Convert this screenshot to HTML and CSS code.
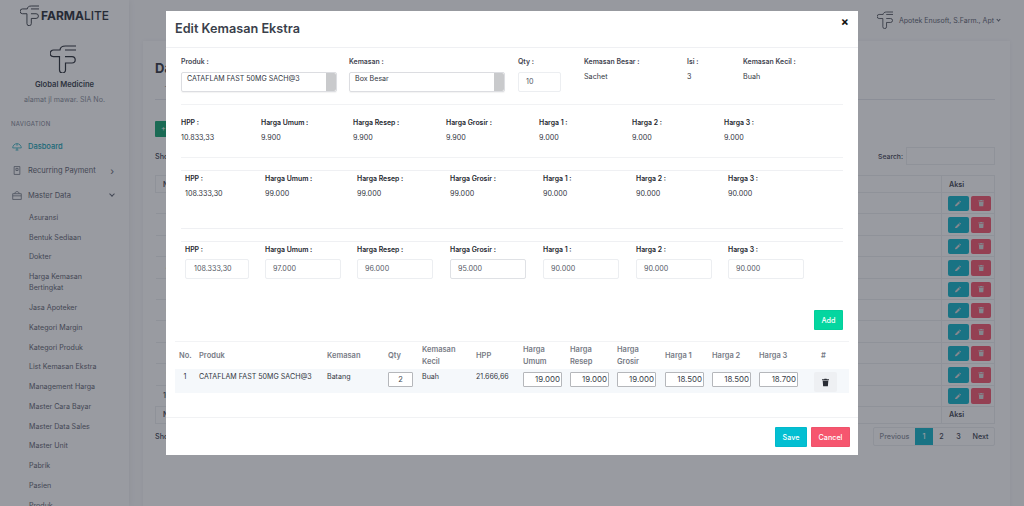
FILE: index.html
```html
<!DOCTYPE html>
<html lang="id">
<head>
<meta charset="utf-8">
<title>Edit Kemasan Ekstra</title>
<link rel="stylesheet" href="styles.css">
</head>
<body>
<svg class="defs" width="0" height="0" aria-hidden="true">
  <symbol id="logo" viewBox="0 0 26 28"><path fill="none" stroke="currentColor" stroke-width="1.2" d="M26 1H15.500C12 1 10.200 2.500 10 5H3.500a3.200 3.200 0 0 0 0 6.600H9.500V25a3 3 0 0 0 6 0V18H22a3.200 3.200 0 0 0 0-6.400H15M26 5H15"/></symbol>
  <symbol id="trash" viewBox="0 0 10 11"><path fill="currentColor" d="M3.500 0h3l.5 1h3v1.200H0V1h3zM1 3h8l-.6 8H1.600z"/></symbol>
  <symbol id="pencil" viewBox="0 0 10 10"><path fill="currentColor" d="M7.200.6l2.200 2.200-1 1-2.200-2.200zM5.500 2.300l2.200 2.200L2.500 9.700 0 10l.3-2.500z"/></symbol>
</svg>
<div class="app">
  <aside class="sidebar">
    <div class="brand"><svg class="brand-logo"><use href="#logo"/></svg><span class="brand-name"><b>FARMA</b>LITE</span></div>
    <div class="profile">
      <svg class="profile-logo"><use href="#logo"/></svg>
      <div class="profile-name">Global Medicine</div>
      <div class="profile-addr">alamat jl mawar. SIA No.</div>
    </div>
    <div class="nav-title">NAVIGATION</div>
    <nav class="nav">
      <div class="nav-item active">
        <svg class="nav-icon" viewBox="0 0 14 12"><path fill="none" stroke="currentColor" d="M1 8a6 6 0 0 1 12 0H1zM7 2v3M5 11h4M7 8v3"/></svg>Dasboard
      </div>
      <div class="nav-item">
        <svg class="nav-icon" viewBox="0 0 14 12"><path fill="none" stroke="currentColor" d="M3 .5h8v11H3zM5.500 3h3v3h-3z"/></svg>Recurring Payment<span class="nav-caret">›</span>
      </div>
      <div class="nav-item">
        <svg class="nav-icon" viewBox="0 0 14 12"><path fill="none" stroke="currentColor" d="M1 3.500h12v8H1zM1 6.500h12M4 3.500c0-4 6-4 6 0"/></svg>Master Data<span class="nav-caret down"></span>
      </div>
      <ul class="subnav">
        <li>Asuransi</li><li>Bentuk Sediaan</li><li>Dokter</li><li>Harga Kemasan Bertingkat</li><li>Jasa Apoteker</li><li>Kategori Margin</li><li>Kategori Produk</li><li>List Kemasan Ekstra</li><li>Management Harga</li><li>Master Cara Bayar</li><li>Master Data Sales</li><li>Master Unit</li><li>Pabrik</li><li>Pasien</li><li>Produk</li>
      </ul>
    </nav>
  </aside>
  <div class="main">
    <header class="topbar">
      <svg class="top-logo"><use href="#logo"/></svg>
      <span class="top-user">Apotek Enusoft, S.Farm., Apt</span><span class="nav-caret down small"></span>
    </header>
    <section class="card">
      <h1 class="page-title">Da</h1>
      <div class="page-sub">—</div>
      <div class="add-btn">+</div>
      <div class="tools"><span>Sho</span><span class="search">Search:<i class="search-box"></i></span></div>
      <table class="bg-table">
        <thead><tr><th>N</th><th></th><th class="aksi">Aksi</th></tr></thead>
        <tbody>
          <tr><td>1</td><td></td><td class="aksi"><span class="act edit"><svg><use href="#pencil"/></svg></span><span class="act del"><svg><use href="#trash"/></svg></span></td></tr>
          <tr><td>2</td><td></td><td class="aksi"><span class="act edit"><svg><use href="#pencil"/></svg></span><span class="act del"><svg><use href="#trash"/></svg></span></td></tr>
          <tr><td>3</td><td></td><td class="aksi"><span class="act edit"><svg><use href="#pencil"/></svg></span><span class="act del"><svg><use href="#trash"/></svg></span></td></tr>
          <tr><td>4</td><td></td><td class="aksi"><span class="act edit"><svg><use href="#pencil"/></svg></span><span class="act del"><svg><use href="#trash"/></svg></span></td></tr>
          <tr><td>5</td><td></td><td class="aksi"><span class="act edit"><svg><use href="#pencil"/></svg></span><span class="act del"><svg><use href="#trash"/></svg></span></td></tr>
          <tr><td>6</td><td></td><td class="aksi"><span class="act edit"><svg><use href="#pencil"/></svg></span><span class="act del"><svg><use href="#trash"/></svg></span></td></tr>
          <tr><td>7</td><td></td><td class="aksi"><span class="act edit"><svg><use href="#pencil"/></svg></span><span class="act del"><svg><use href="#trash"/></svg></span></td></tr>
          <tr><td>8</td><td></td><td class="aksi"><span class="act edit"><svg><use href="#pencil"/></svg></span><span class="act del"><svg><use href="#trash"/></svg></span></td></tr>
          <tr><td>9</td><td></td><td class="aksi"><span class="act edit"><svg><use href="#pencil"/></svg></span><span class="act del"><svg><use href="#trash"/></svg></span></td></tr>
          <tr><td>10</td><td></td><td class="aksi"><span class="act edit"><svg><use href="#pencil"/></svg></span><span class="act del"><svg><use href="#trash"/></svg></span></td></tr>
        </tbody>
        <tfoot><tr><th>N</th><th></th><th class="aksi">Aksi</th></tr></tfoot>
      </table>
      <div class="tools bottom"><span>Sho</span>
        <div class="pager"><span class="muted">Previous</span><span class="on">1</span><span>2</span><span>3</span><span>Next</span></div>
      </div>
    </section>
  </div>
</div>

<div class="backdrop"></div>

<div class="modal">
  <div class="modal-head"><h2 class="modal-title">Edit Kemasan Ekstra</h2><span class="close">×</span></div>
  <div class="modal-body">
    <div class="sec sec-top">
      <div class="field w168"><label>Produk :</label><div class="sel"><span>CATAFLAM FAST 50MG SACH@3</span></div></div>
      <div class="field w169"><label>Kemasan :</label><div class="sel"><span>Box Besar</span></div></div>
      <div class="field w66"><label>Qty :</label><div class="inp qty-top">10</div></div>
      <div class="field w103"><label>Kemasan Besar :</label><div class="val top-val">Sachet</div></div>
      <div class="field w56"><label>Isi :</label><div class="val top-val">3</div></div>
      <div class="field"><label>Kemasan Kecil :</label><div class="val top-val">Buah</div></div>
    </div>
    <div class="sec prices first">
      <div><label>HPP :</label><div class="val">10.833,33</div></div>
      <div><label>Harga Umum :</label><div class="val">9.900</div></div>
      <div><label>Harga Resep :</label><div class="val">9.900</div></div>
      <div><label>Harga Grosir :</label><div class="val">9.900</div></div>
      <div><label>Harga 1 :</label><div class="val">9.000</div></div>
      <div><label>Harga 2 :</label><div class="val">9.000</div></div>
      <div><label>Harga 3 :</label><div class="val">9.000</div></div>
    </div>
    <div class="sec prices second">
      <div><label>HPP :</label><div class="val">108.333,30</div></div>
      <div><label>Harga Umum :</label><div class="val">99.000</div></div>
      <div><label>Harga Resep :</label><div class="val">99.000</div></div>
      <div><label>Harga Grosir :</label><div class="val">99.000</div></div>
      <div><label>Harga 1 :</label><div class="val">90.000</div></div>
      <div><label>Harga 2 :</label><div class="val">90.000</div></div>
      <div><label>Harga 3 :</label><div class="val">90.000</div></div>
    </div>
    <div class="sec prices third">
      <div><label>HPP :</label><div class="inp hpp">108.333,30</div></div>
      <div><label>Harga Umum :</label><div class="inp">97.000</div></div>
      <div><label>Harga Resep :</label><div class="inp">96.000</div></div>
      <div><label>Harga Grosir :</label><div class="inp strong">95.000</div></div>
      <div><label>Harga 1 :</label><div class="inp">90.000</div></div>
      <div><label>Harga 2 :</label><div class="inp">90.000</div></div>
      <div><label>Harga 3 :</label><div class="inp">90.000</div></div>
    </div>
    <div class="add-row"><button class="btn green" type="button">Add</button></div>
    <table class="items">
      <colgroup><col class="c20"><col class="c128"><col class="c61"><col class="c34"><col class="c54"><col class="c47"><col class="c47"><col class="c47"><col class="c48"><col class="c47"><col class="c47"><col class="c47"></colgroup>
      <thead>
        <tr><th>No.</th><th>Produk</th><th>Kemasan</th><th>Qty</th><th>Kemasan Kecil</th><th>HPP</th><th>Harga Umum</th><th>Harga Resep</th><th>Harga Grosir</th><th>Harga 1</th><th>Harga 2</th><th>Harga 3</th><th class="center">#</th></tr>
      </thead>
      <tbody>
        <tr>
          <td class="center">1</td><td>CATAFLAM FAST 50MG SACH@3</td><td>Batang</td>
          <td><span class="cell-in qty">2</span></td><td>Buah</td><td>21.666,66</td>
          <td><span class="cell-in">19.000</span></td><td><span class="cell-in">19.000</span></td><td><span class="cell-in">19.000</span></td><td><span class="cell-in">18.500</span></td><td><span class="cell-in">18.500</span></td><td><span class="cell-in">18.700</span></td>
          <td class="center"><span class="trash-btn"><svg><use href="#trash"/></svg></span></td>
        </tr>
      </tbody>
    </table>
  </div>
  <div class="modal-foot"><button class="btn cyan" type="button">Save</button><button class="btn red" type="button">Cancel</button></div>
</div>
</body>
</html>
```
FILE: styles.css
```css
* { box-sizing: border-box; }
html, body { margin: 0; height: 506px; overflow: hidden; }
body { font-family: Inter, "Liberation Sans", sans-serif; font-size: 7.200px; color: #3e4452; background: #fbfbfc; }
.defs { position: absolute; }
.app { display: flex; height: 506px; overflow: hidden; }

/* sidebar */
.sidebar { width: 129px; flex: none; background: #fff; box-shadow: 1px 0 6px rgba(0,0,0,.06); height: 506px; overflow: hidden; }
.brand { display: flex; align-items: center; padding: 3px 0 0 20px; height: 28px; color: #2c3039; }
.brand-logo { width: 19px; height: 21px; flex: none; }
.brand-name { font-size: 12px; font-weight: 500; margin-left: 2px; line-height: 14px; }
.brand-name b { font-weight: 700; }
.profile { text-align: center; padding-top: 17px; }
.profile-logo { display: block; width: 26px; height: 28px; margin: 0 auto 0 50px; color: #2c3039; }
.profile-name { font-weight: 600; font-size: 7.600px; line-height: 12px; margin-top: 6px; color: #3a3f4b; }
.profile-addr { font-size: 7.100px; line-height: 12px; margin-top: 3px; color: #8a8f9b; }
.nav-title { font-size: 6px; letter-spacing: .3px; color: #7d8290; padding-left: 11px; line-height: 10px; margin-top: 13px; }
.nav { margin-top: 5px; }
.nav-item { display: flex; align-items: center; height: 24.500px; padding-left: 12px; font-size: 7.500px; color: #5f6572; position: relative; }
.nav-item.active { color: #13a3b4; font-weight: 500; }
.nav-icon { width: 10px; height: 9px; margin-right: 6px; flex: none; }
.nav-caret { position: absolute; right: 15px; font-size: 10px; line-height: 10px; }
.nav-caret.down { width: 4px; height: 4px; border: solid #5f6572; border-width: 0 1px 1px 0; transform: rotate(45deg); top: 9px; }
.nav-caret.down.small { position: static; display: inline-block; width: 3px; height: 3px; margin: 0 0 2px 3px; }
.subnav { list-style: none; margin: 0; padding: 0 24px 0 29px; }
.subnav li { font-size: 7.100px; line-height: 11px; padding: 4.400px 0; color: #5f6572; }

/* page behind */
.main { flex: 1; min-width: 0; padding: 0 14px; }
.topbar { height: 41px; display: flex; align-items: center; justify-content: flex-end; color: #5f6572; padding-right: 24px; padding-bottom: 1px; margin: 0 -14px; }
.top-logo { width: 16px; height: 18px; color: #2c3039; margin-right: 6px; }
.top-user { font-size: 7px; }
.card { background: #fff; height: 500px; padding: 20px 15px 0 12px; margin-left: 0; box-shadow: 0 0 4px rgba(0,0,0,.05); width: 867px; }
.page-title { font-size: 13px; font-weight: 700; margin: 0; line-height: 15px; color: #343843; }
.page-sub { line-height: 12px; margin-top: 5px; padding-left: 10px; color: #777; padding-bottom: 6px; border-bottom: 1px solid #e6e8ec; }
.add-btn { background: #17a673; color: #fff; width: 60px; height: 16px; border-radius: 1px; margin-top: 21px; padding: 3px 6px; }
.tools { display: flex; justify-content: space-between; align-items: center; height: 18px; margin-top: 10px; font-weight: 500; }
.search { display: flex; align-items: center; gap: 3px; font-size: 6.800px; }
.search-box { display: block; width: 89px; height: 18px; border: 1px solid #eceef1; }
.bg-table { width: 100%; border-collapse: collapse; table-layout: fixed; margin-top: 10px; }
.bg-table th { text-align: left; font-size: 7.200px; height: 17px; font-weight: 600; padding: 0 7px; border: 1px solid #eceef1; }
.bg-table td { height: 21.400px; padding: 0 7px; border-top: 1px solid #eceef1; border-bottom: 1px solid #eceef1; font-weight: 500; }
.bg-table td:first-child, .bg-table th:first-child { width: 40px; }
.bg-table td:first-child { text-align: right; padding-right: 25px; }
.aksi { width: 53px; }
.bg-table td.aksi { border-left: 1px solid #eceef1; border-right: 1px solid #eceef1; padding: 1px 0 0 6px; white-space: nowrap; }
.act { display: inline-flex; align-items: center; justify-content: center; width: 21px; height: 15.500px; border-radius: 2px; color: #d9dadd; vertical-align: middle; margin-right: 2px; }
.act svg { width: 6.500px; height: 6.500px; }
.edit { background: #14b5c9; }
.del { background: #f5576f; width: 20px; }
.tools.bottom { margin-top: 4px; }
.pager { display: flex; align-items: stretch; height: 19px; border: 1px solid #eceef1; border-radius: 2px; width: 122px; }
.pager span { display: flex; align-items: center; justify-content: center; flex: 1; font-weight: 500; }
.pager .muted { flex: none; width: 41px; color: #8a8f9b; }
.pager .on { background: #14b5c9; color: #fff; flex: none; width: 18px; }
.pager span:last-child { flex: none; width: 27px; }

/* dim layer */
.backdrop { position: fixed; inset: 0; background: rgba(32,36,50,.46); }

/* modal */
.modal { position: fixed; left: 166px; top: 11px; width: 692px; height: 444px; background: #fff; display: flex; flex-direction: column; color: #33373f; }
.modal-head { height: 37px; flex: none; display: flex; align-items: center; justify-content: space-between; padding: 0 9px; border-bottom: 1px solid #eff0f3; }
.modal-title { font-size: 12.700px; font-weight: 600; margin: 0; color: #3a3f4b; line-height: 16px; }
.close { font-size: 12px; line-height: 10px; font-weight: 700; color: #111; align-self: flex-start; margin: 6px 0 0; }
.modal-body { flex: 1; padding: 0 9px; }
.modal-foot { flex: none; height: 38px; border-top: 1px solid #f1f2f4; display: flex; justify-content: flex-end; gap: 4px; padding: 9px 8px 0 0; }

label { display: block; font-size: 6.900px; line-height: 12px; font-weight: 600; color: #23262e; }
.val { font-size: 7.200px; line-height: 12px; margin-top: 3px; color: #33373f; }
.sec { margin: 0 6px; }
.sec-top { display: flex; padding-top: 8px; height: 57px; border-bottom: 1px solid #f1f2f4; }
.sec-top label { color: #3f4450; }
.w168 { width: 168px; }
.w169 { width: 169px; }
.w66 { width: 66px; }
.w103 { width: 103px; }
.w56 { width: 56px; }
.sel { height: 20px; margin-top: 4px; width: 156px; border: 1px solid #dcdde1; border-radius: 2px; position: relative; padding: 0 5px; line-height: 11px; font-size: 7.100px; box-shadow: 0 1px 1px rgba(0,0,0,.05); }
.sel::after { content: ""; position: absolute; top: 0; right: 0; bottom: 0; width: 10px; background: #c9cacc; border-radius: 0 2px 2px 0; }
.inp { height: 20px; margin-top: 3px; border: 1px solid #eceef1; border-radius: 2px; padding-left: 7px; line-height: 18px; font-size: 7.200px; color: #555a66; width: 76px; }
.qty-top { width: 43px; margin-top: 4px; }
.top-val { margin-top: 3px; }
.prices { display: grid; grid-template-columns: 80px 92px 93px 93px 93px 92px 1fr; }
.first { padding-top: 12px; height: 53px; border-bottom: 1px solid #f1f2f4; }
.second { margin-top: 12px; padding: 2px 0 0 4px; height: 59px; border-top: 1px solid #eff0f3; border-bottom: 1px solid #eff0f3; }
.third { margin-top: 12px; padding: 2px 0 0 4px; border-top: 1px solid #eff0f3; }
.inp.hpp { width: 64px; padding-left: 8px; }
.inp.strong { border-color: #dfe1e5; }
.add-row { display: flex; justify-content: flex-end; margin: 31px 6px 0; }

.btn { border: 1px solid rgba(0,0,0,.03); font: 500 7.200px Inter, "Liberation Sans", sans-serif; color: #fff; height: 20px; padding: 0; border-radius: 1px; }
.green { background: #04d6a0; width: 29px; }
.cyan { background: #03bfd2; width: 32px; }
.red { background: #f6566f; width: 39px; }

.items { width: 674px; margin-top: 11px; border-collapse: collapse; table-layout: fixed; }
.items thead tr { border-top: 1px solid #f2f3f5; }
.items th { font-size: 7.500px; font-weight: 600; line-height: 11.500px; color: #777b85; text-align: left; padding: 2px 4px; height: 27px; }
.items td { background: #f5f8fb; height: 24px; padding: 3px 0 0 4px; vertical-align: top; font-size: 7.100px; line-height: 10px; color: #33373f; white-space: nowrap; }
.items .center { text-align: center; padding-left: 0; }
.c20 { width: 20px; } .c128 { width: 128px; } .c61 { width: 61px; } .c34 { width: 34px; } .c54 { width: 54px; } .c47 { width: 47px; } .c48 { width: 48px; }
.cell-in { display: block; width: 39px; height: 15px; border: 1px solid #b5b7bb; border-radius: 1px; background: #fff; text-align: right; font-size: 7.900px; line-height: 13px; padding-right: 1px; color: #3a3f4b; }
.cell-in.qty { width: 25px; text-align: center; padding: 0; font-size: 7.500px; }
.trash-btn { display: inline-flex; width: 23px; height: 20px; background: #eef0f3; border-radius: 2px; align-items: center; justify-content: center; color: #2a2d35; }
.trash-btn svg { width: 7px; height: 9px; }
```
